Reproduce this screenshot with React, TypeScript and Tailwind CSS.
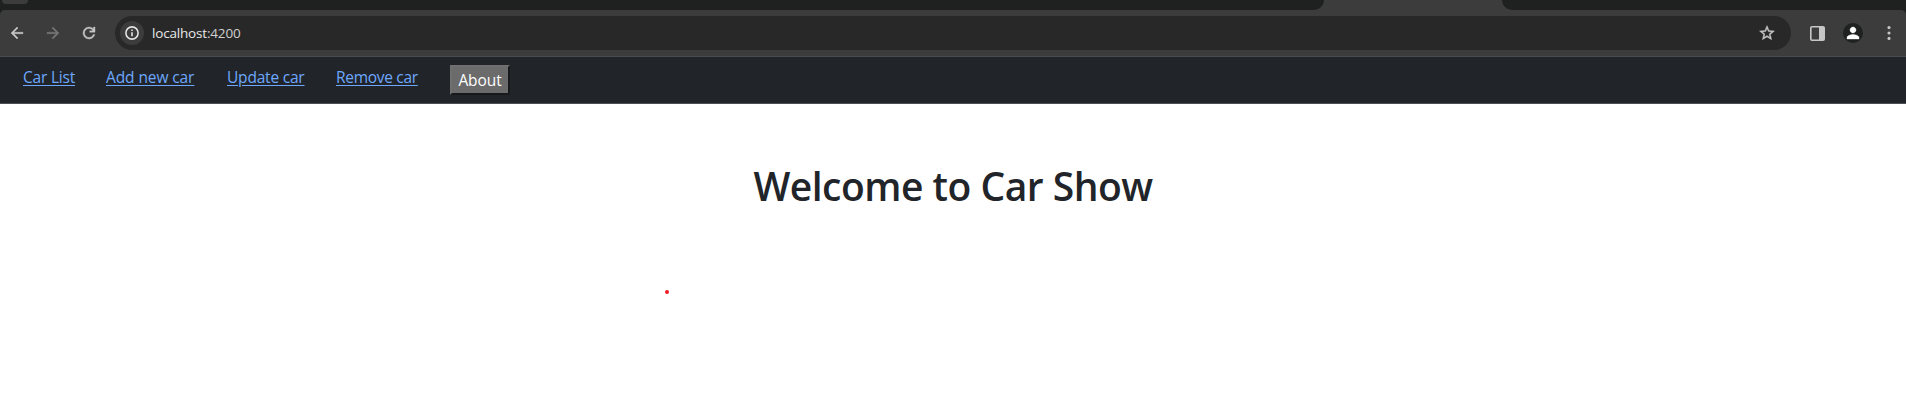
const links = [
  { label: "Car List", box: "w-[51px]", spacing: "tracking-[-0.2px]" },
  { label: "Add new car", box: "w-[89px]", spacing: "tracking-[-0.1px]" },
  { label: "Update car", box: "w-[77px]", spacing: "tracking-[-0.2px]" },
  { label: "Remove car", box: "w-[82px]", spacing: "tracking-[-0.3px]" },
];

function Glyph({ d, className }: { d: string; className: string }) {
  return (
    <svg viewBox="0 0 24 24" fill="currentColor" stroke="currentColor" strokeWidth="0.5" className={className}>
      <path d={d} />
    </svg>
  );
}

function TabStrip() {
  return (
    <div className="flex h-[10px] shrink-0 bg-[#3c3c3c]">
      <div className="w-[1324px] rounded-br-[10px] bg-[#1f2120] pl-[2px]">
        <div className="h-1 w-[26px] rounded-b-[10px] bg-[#3c3c3c]" />
      </div>
      <div className="w-[178px]" />
      <div className="grow rounded-bl-[10px] bg-[#1f2120]" />
    </div>
  );
}

function Toolbar() {
  return (
    <div className="bg-[#1f2120]">
      <div className="flex h-[47px] items-center rounded-t-[5px] border-b border-[#4a4b4c] bg-[#3c3c3c] text-[#c7c7c7]">
        <Glyph className="ml-2 size-[18px]" d="M20 11H7.83l5.59-5.59L12 4l-8 8 8 8 1.41-1.41L7.83 13H20v-2z" />
        <Glyph className="ml-[18px] size-[18px] text-[#757575]" d="M12 4l-1.41 1.41L16.17 11H4v2h12.17l-5.58 5.59L12 20l8-8z" />
        <Glyph
          className="ml-[18px] size-[18px]"
          d="M12 20q-3.35 0-5.675-2.325T4 12t2.325-5.675T12 4q1.725 0 3.3.712T18 6.75V4h2v7h-7V9h4.2q-.8-1.4-2.187-2.2T12 6Q9.5 6 7.75 7.75T6 12t1.75 4.25T12 18q1.925 0 3.475-1.1T17.65 14h2.1q-.7 2.65-2.85 4.325T12 20z"
        />
        <div className="ml-[17px] flex h-[34px] w-[1676px] items-center rounded-full bg-[#282828] pr-[15px] pl-[5px]">
          <div className="flex size-6 items-center justify-center rounded-full bg-[#3c3c3c]">
            <svg viewBox="0 0 14 14" className="size-[14px]" fill="none" stroke="#e3e3e3">
              <circle cx="7" cy="7" r="6.1" strokeWidth="1.6" />
              <path d="M7 6.3v4M7 3.5v1.5" strokeWidth="1.6" />
            </svg>
          </div>
          <span className="ml-2 font-['Open_Sans','Noto_Sans',sans-serif] text-[13.5px] leading-5 tracking-[-0.18px] text-[#e9e9e9]">
            localhost<span className="text-[#d0d0d0]">:4200</span>
          </span>
          <Glyph
            className="ml-auto size-[18px]"
            d="M22 9.24l-7.19-.62L12 2 9.19 8.63 2 9.24l5.46 4.73L5.82 21 12 17.27 18.18 21l-1.63-7.03L22 9.24zM12 15.4l-3.76 2.27 1-4.28-3.32-2.88 4.38-.38L12 6.1l1.71 4.04 4.38.38-3.32 2.88 1 4.28L12 15.4z"
          />
        </div>
        <svg viewBox="0 0 15 15" className="ml-[19px] size-[15px]">
          <rect x="0.8" y="0.8" width="13.4" height="13.4" rx="1.2" fill="none" stroke="#c7c7c7" strokeWidth="1.6" />
          <path d="M9 1h5.2v13H9z" fill="#c7c7c7" />
        </svg>
        <div className="ml-[18px] flex size-5 items-center justify-center rounded-full bg-[#1f2120]">
          <Glyph
            className="size-[18px] text-white"
            d="M12 12c2.21 0 4-1.79 4-4s-1.79-4-4-4-4 1.79-4 4 1.79 4 4 4zm0 2c-2.67 0-8 1.34-8 4v2h16v-2c0-2.66-5.33-4-8-4z"
          />
        </div>
        <svg viewBox="0 0 4 14" fill="#c7c7c7" className="ml-6 h-[14px] w-1">
          <circle cx="2" cy="1.6" r="1.55" />
          <circle cx="2" cy="7" r="1.55" />
          <circle cx="2" cy="12.4" r="1.55" />
        </svg>
      </div>
    </div>
  );
}

export default function App() {
  return (
    <div className="flex h-[416px] w-[1906px] flex-col overflow-hidden bg-white font-['Open_Sans','Noto_Sans',sans-serif]">
      <TabStrip />
      <Toolbar />
      <nav className="flex h-[47px] shrink-0 items-start gap-8 border-b border-[#4d5054] bg-[#212529] pt-2 pl-[23px] text-[15.5px] leading-6">
        {links.map((link) => (
          <a
            key={link.label}
            href="#"
            className={`${link.box} ${link.spacing} whitespace-nowrap text-[#6ea8fe] underline decoration-1 underline-offset-2`}
          >
            {link.label}
          </a>
        ))}
        <button
          type="button"
          className="h-[30px] w-[60px] border-2 border-t-[#6f6f6f] border-r-[#17191b] border-b-[#17191b] border-l-[#6f6f6f] bg-[#6b6b6b] text-center leading-6 tracking-[-0.1px] text-white"
        >
          About
        </button>
      </nav>
      <main className="flex flex-col">
        <h1 className="pt-[58px] text-center text-[39px] leading-[48px] font-semibold tracking-[-0.5px] whitespace-nowrap text-[#212529]">
          Welcome to Car Show
        </h1>
        <span className="mt-[80px] ml-[665px] size-1 rounded-full bg-[#ed1c24]" />
      </main>
    </div>
  );
}
